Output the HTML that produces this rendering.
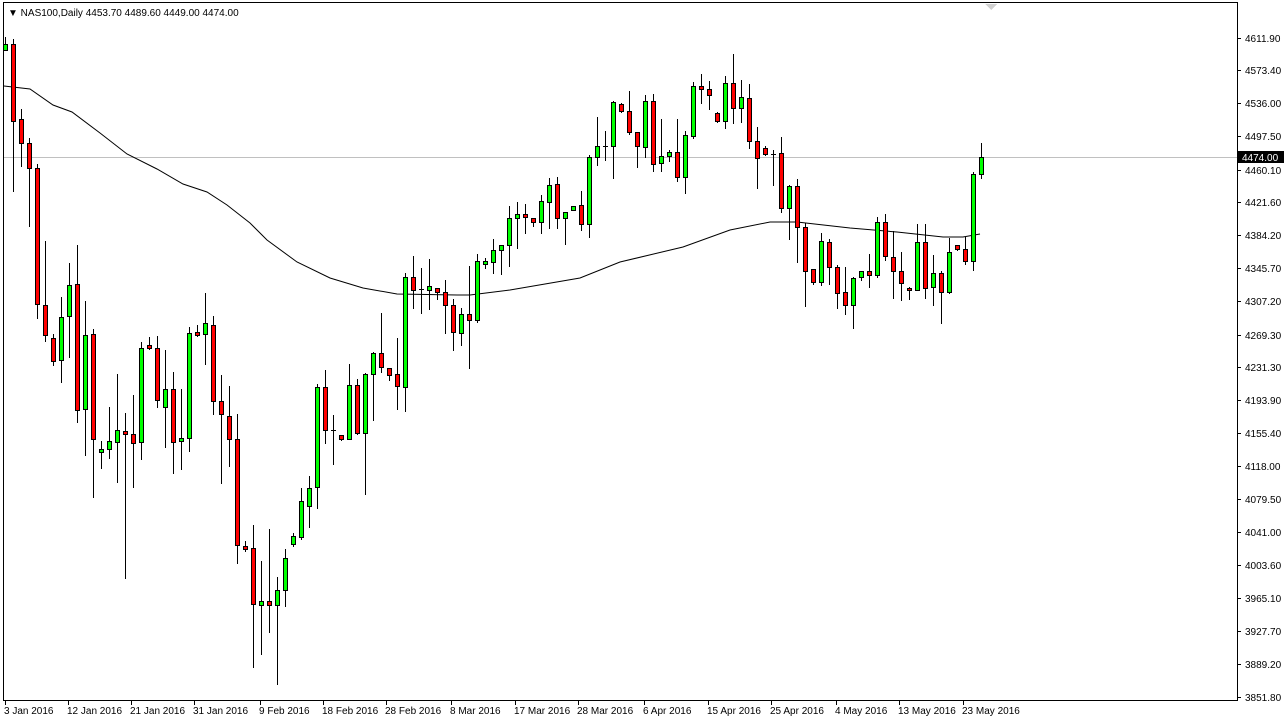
<!DOCTYPE html>
<html><head><meta charset="utf-8"><style>
html,body{margin:0;padding:0;background:#fff;width:1285px;height:723px;overflow:hidden}
svg{display:block}
text{font-family:"Liberation Sans",sans-serif;font-size:10px;fill:#000}
</style></head><body>
<svg id="s" width="1285" height="723" xmlns="http://www.w3.org/2000/svg" shape-rendering="crispEdges">
<rect x="0" y="0" width="1285" height="723" fill="#fff"/>
<rect x="3.5" y="2.5" width="1234" height="698" fill="none" stroke="#000"/>
<line x1="4" y1="157.5" x2="1237" y2="157.5" stroke="#c0c0c0"/>
<polyline fill="none" stroke="#000" stroke-width="1" shape-rendering="auto" points="4,86 30,89 53,105 72,112 100,133 127,154 157,169 183,184 207,192 227,205 250,223 267,240 297,262 330,278 363,288 397,294 457,295 470,295 510,290 580,278 620,262 683,247 730,230 770,222 797,222 850,228 897,232 943,237 963,237 980,234"/>
<g id="c"></g>
<text x="8" y="16">▼ NAS100,Daily  4453.70 4489.60 4449.00 4474.00</text>
<polygon points="985,4 997,4 991,10" fill="#d0d0d0"/>
<g id="ax"></g>
<rect x="1238" y="151" width="46" height="12" fill="#000"/>
<text x="1242" y="161" style="fill:#fff">4474.00</text>
</svg>
<script>
var d=[
[44,50,37,50,'g'],[44,121,39,191,'r'],[119,143,109,166,'r'],[143,168,138,226,'r'],[168,304,164,318,'r'],
[305,335,241,341,'r'],[338,361,334,365,'r'],[317,360,297,382,'g'],[285,316,263,357,'g'],[284,410,245,422,'r'],
[335,409,301,455,'g'],[334,439,329,497,'r'],[449,452,441,468,'g'],[441,449,407,458,'g'],[430,442,374,482,'g'],
[431,434,413,578,'r'],[434,443,395,487,'r'],[348,442,342,459,'g'],[345,348,337,349,'r'],[348,400,336,407,'r'],
[389,407,350,447,'g'],[389,442,372,473,'r'],[438,441,389,469,'g'],[333,438,327,451,'g'],[332,335,325,336,'r'],
[323,334,293,364,'g'],[325,401,316,414,'r'],[401,414,375,483,'r'],[416,439,386,466,'r'],[439,545,414,563,'r'],
[546,549,541,551,'r'],[548,604,525,667,'r'],[601,605,561,654,'g'],[601,605,529,632,'r'],[590,605,577,684,'g'],
[558,590,549,606,'g'],[536,544,533,546,'g'],[501,537,488,539,'g'],[488,506,476,527,'g'],[387,487,384,508,'g'],
[387,430,370,443,'r'],[430,431,415,464,'d'],[435,439,435,440,'r'],[385,439,364,439,'g'],[385,433,379,434,'r'],
[374,433,373,494,'g'],[353,374,352,420,'g'],[353,367,313,372,'r'],[368,375,368,380,'r'],[374,386,338,409,'r'],
[277,387,273,411,'g'],[277,290,256,308,'r'],[289,290,268,313,'d'],[286,290,259,309,'g'],[288,292,288,299,'r'],
[292,305,280,333,'r'],[305,332,299,350,'r'],[314,333,308,345,'g'],[314,320,266,368,'r'],[261,320,254,322,'g'],
[261,264,258,268,'g'],[250,262,239,273,'g'],[245,250,245,274,'g'],[218,245,206,266,'g'],[214,218,202,248,'g'],
[214,217,204,233,'r'],[218,222,218,226,'r'],[201,222,195,233,'g'],[185,202,178,228,'g'],[184,218,177,228,'r'],
[212,218,212,244,'g'],[206,210,206,210,'g'],[205,224,191,230,'r'],[157,224,155,237,'g'],[146,157,117,165,'g'],
[146,147,131,160,'d'],[102,146,101,178,'g'],[104,111,103,112,'r'],[111,132,91,134,'r'],[132,146,132,167,'r'],
[101,147,95,157,'g'],[101,164,94,171,'r'],[156,163,119,171,'g'],[152,156,150,161,'g'],[152,177,119,181,'r'],
[135,177,131,193,'g'],[86,136,82,138,'g'],[86,89,74,103,'r'],[89,95,81,109,'r'],[113,121,112,122,'r'],
[83,121,76,128,'g'],[83,108,54,123,'r'],[97,108,80,122,'g'],[98,141,84,148,'r'],[141,158,127,188,'r'],
[148,154,146,155,'r'],[154,155,150,185,'d'],[153,208,137,212,'r'],[186,208,185,239,'g'],[186,227,179,262,'r'],
[227,271,223,306,'r'],[269,282,269,284,'r'],[241,282,233,285,'g'],[242,267,239,284,'r'],[267,293,265,308,'r'],
[292,305,267,314,'r'],[278,305,277,328,'g'],[271,277,271,280,'g'],[271,275,254,287,'r'],[222,275,217,277,'g'],
[222,256,214,260,'r'],[257,271,231,298,'r'],[271,283,252,300,'r'],[288,290,287,299,'r'],[242,290,224,290,'g'],
[242,288,224,298,'r'],[273,287,255,305,'g'],[273,292,271,323,'r'],[252,292,238,293,'g'],[245,249,245,250,'r'],
[249,261,237,264,'r'],[174,261,172,270,'g'],[157,174,143,178,'g']];
var h='';
d.forEach(function(c,i){var x=5+8*i;
h+='<line x1="'+(x+0.5)+'" y1="'+c[2]+'" x2="'+(x+0.5)+'" y2="'+(c[3]+1)+'" stroke="#000"/>';
if(c[4]=='d'){h+='<line x1="'+(x-2)+'" y1="'+(c[0]+0.5)+'" x2="'+(x+3)+'" y2="'+(c[0]+0.5)+'" stroke="#000"/>';}
else{var t=c[0],b=Math.max(c[1],c[0]+2);h+='<rect x="'+(x-1.5)+'" y="'+(t+0.5)+'" width="4" height="'+(b-t)+'" fill="'+(c[4]=='g'?'#00ff00':'#ff0000')+'" stroke="#000"/>';}
});
document.getElementById('c').innerHTML=h;
var L=[[4611.90,38],[4573.40,70],[4536.00,103],[4497.50,136],[4460.10,170],[4421.60,202],[4384.20,235],[4345.70,268],[4307.20,301],[4269.30,335],[4231.30,367],[4193.90,400],[4155.40,433],[4118.00,466],[4079.50,499],[4041.00,532],[4003.60,565],[3965.10,598],[3927.70,631],[3889.20,664],[3851.80,697]];
var a='';
L.forEach(function(l){a+='<line x1="1237" y1="'+(l[1]+0.5)+'" x2="1241" y2="'+(l[1]+0.5)+'" stroke="#000"/><text x="1245" y="'+(l[1]+4)+'">'+l[0].toFixed(2)+'</text>';});
var D=[['3 Jan 2016',5],['12 Jan 2016',68],['21 Jan 2016',131],['31 Jan 2016',194],['9 Feb 2016',260],['18 Feb 2016',323],['28 Feb 2016',386],['8 Mar 2016',451],['17 Mar 2016',515],['28 Mar 2016',578],['6 Apr 2016',644],['15 Apr 2016',708],['25 Apr 2016',771],['4 May 2016',836],['13 May 2016',899],['23 May 2016',963]];
D.forEach(function(t){a+='<line x1="'+(t[1]+0.5)+'" y1="700" x2="'+(t[1]+0.5)+'" y2="705" stroke="#000"/><text x="'+(t[1]-1)+'" y="714">'+t[0]+'</text>';});
document.getElementById('ax').innerHTML=a;
</script>
</body></html>
